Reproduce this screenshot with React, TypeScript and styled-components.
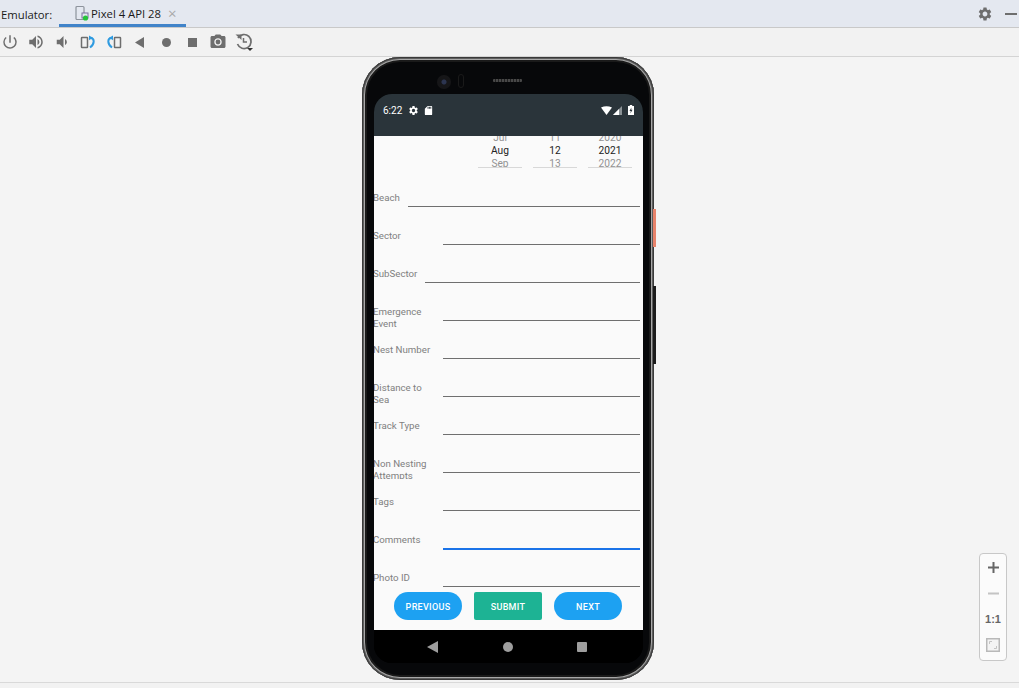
import React from 'react'
import styled, { createGlobalStyle } from 'styled-components'
import { MdPhotoCamera, MdPowerSettingsNew, MdSdCard, MdSettings, MdVolumeDown, MdVolumeUp } from 'react-icons/md'

const GlobalStyle = createGlobalStyle`
    html, body {
        margin: 0;
        height: 100%;
        background: #f4f4f4;
    }
    #root {
        height: 100%;
    }
`

const Page = styled.div`
    display: flex;
    flex-direction: column;
    position: relative;
    height: 688px;
    overflow: hidden;
    background: #f4f4f4;
    font-family: 'Open Sans', 'Liberation Sans', sans-serif;
`

const TabBar = styled.div`
    display: flex;
    align-items: stretch;
    height: 27px;
    background: #e4e8f0;
    border-bottom: 1px solid #c9c9c9;
    padding: 0 2px 0 1px;
    color: #1a1a1a;
    font-size: 11.3px;
`

const TabTitle = styled.div`
    width: 58px;
    line-height: 29px;
`

const Tab = styled.div`
    display: flex;
    align-items: center;
    gap: 1px;
    width: 127px;
    height: 27px;
    padding: 2px 0 0 16px;
    box-sizing: border-box;
    border-bottom: 3px solid #4083c9;
`

const TabClose = styled.span`
    margin-left: 6px;
    color: #a9a9a9;
    font-size: 15px;
    line-height: 1;
`

const TabBarEnd = styled.div`
    display: flex;
    align-items: center;
    gap: 12px;
    margin-left: auto;
    color: #6e6e6e;
`

const Minimize = styled.span`
    display: block;
    width: 12px;
    height: 2px;
    background: #6e6e6e;
`

const Toolbar = styled.div`
    display: flex;
    align-items: center;
    gap: 6px;
    height: 28px;
    background: #f2f2f2;
    border-bottom: 1px solid #d4d4d4;
    color: #6e6e6e;
`

const ToolIcon = styled.span`
    display: flex;
    align-items: center;
    justify-content: center;
    width: 20px;
    height: 20px;
    font-size: 18px;
`

const Main = styled.div`
    flex: 1;
    display: flex;
    justify-content: center;
    padding-right: 3px;
    min-height: 0;
`

const Phone = styled.div`
    position: relative;
    width: 292px;
    height: 623px;
    box-sizing: border-box;
    padding: 37px 11px 17px 12px;
    background: #07080a;
    border-radius: 38px;
    box-shadow: inset 0 0 0 1px #3a3a3a, inset 0 0 0 2px #5e5e5e, inset 0 0 0 3px #a8a8a8, inset 0 0 0 5px #1a1a1a;
`

const SideButton = styled.span<{ $top: number; $height: number; $color: string }>`
    position: absolute;
    right: -2px;
    top: ${p => p.$top}px;
    width: 3px;
    height: ${p => p.$height}px;
    background: ${p => p.$color};
`

const Camera = styled.span`
    position: absolute;
    left: 75px;
    top: 18px;
    width: 14px;
    height: 14px;
    border-radius: 50%;
    background: radial-gradient(circle, #2c3550 0 2px, #161618 3px 7px);
`

const Sensor = styled.span`
    position: absolute;
    left: 96px;
    top: 17px;
    width: 6px;
    height: 14px;
    border-radius: 3px;
    border: 1px solid #1a1a1a;
    box-sizing: border-box;
`

const Speaker = styled.span`
    position: absolute;
    left: 131px;
    top: 22px;
    width: 29px;
    height: 3px;
    border-radius: 1px;
    background: repeating-linear-gradient(90deg, #484848 0 2px, #222 2px 3px);
`

const Screen = styled.div`
    display: flex;
    flex-direction: column;
    height: 100%;
    border-radius: 18px;
    overflow: hidden;
    background: #000;
    font-family: Roboto, 'Liberation Sans', sans-serif;
`

const StatusBar = styled.div`
    display: flex;
    align-items: center;
    height: 42px;
    padding: 0 9px 10px;
    box-sizing: border-box;
    background: #2a343a;
    color: #fff;
    font-size: 10px;
`

const StatusTime = styled.span`
    margin-right: 6px;
`

const StatusIcon = styled.span`
    display: flex;
    margin-right: 4px;
    font-size: 11px;
`

const StatusRight = styled.div`
    display: flex;
    align-items: center;
    gap: 1px;
    margin-left: auto;
`

const Content = styled.div`
    flex: 1;
    display: flex;
    flex-direction: column;
    min-height: 0;
    overflow: hidden;
    background: #fafafa;
`

const Picker = styled.div`
    display: flex;
    gap: 11px;
    height: 32px;
    margin: 0 0 22px 104px;
    overflow: hidden;
`

const Wheel = styled.div`
    width: 44px;
    height: 31px;
    border-bottom: 1px solid #d8d8d8;
    overflow: hidden;
    text-align: center;
    font-size: 10.2px;
    line-height: 13px;
`

const WheelInner = styled.div`
    margin-top: -5px;
`

const WheelItem = styled.div<{ $selected?: boolean }>`
    color: ${p => (p.$selected ? '#222' : '#929292')};
`

const Form = styled.div`
    flex: 1;
    min-height: 0;
    overflow: hidden;
    padding-right: 3px;
`

const Row = styled.div<{ $labelWidth: number }>`
    display: grid;
    grid-template-columns: ${p => p.$labelWidth}px 1fr;
    height: 38px;
`

const Label = styled.div`
    height: 23px;
    padding: 2px 6px 0 0;
    margin-left: -1px;
    box-sizing: border-box;
    overflow: hidden;
    font-size: 9.7px;
    line-height: 11.5px;
    color: #808080;
`

const Line = styled.div<{ $focused?: boolean }>`
    height: ${p => (p.$focused ? 18 : 17)}px;
    box-sizing: border-box;
    border-bottom: ${p => (p.$focused ? '2px solid #1a73e8' : '1px solid #6f6f6f')};
`

const ButtonBar = styled.div`
    display: flex;
    gap: 12px;
    padding: 0 0 10px 20px;
`

const ActionButton = styled.button<{ $square?: boolean }>`
    width: 68px;
    height: 28px;
    padding: 1px 0 0;
    border: 0;
    border-radius: ${p => (p.$square ? '2px' : '14px')};
    background: ${p => (p.$square ? '#1db394' : '#1da1f2')};
    color: #fff;
    font-family: Roboto, 'Liberation Sans', sans-serif;
    font-size: 9px;
    font-weight: 500;
    letter-spacing: 0.3px;
`

const NavBar = styled.div`
    display: flex;
    align-items: center;
    height: 33px;
    background: #000;
`

const NavSlot = styled.span<{ $left: number }>`
    display: flex;
    margin-left: ${p => p.$left}px;
`

const NavCircle = styled.span`
    display: block;
    width: 10px;
    height: 10px;
    border-radius: 50%;
    background: #9e9e9e;
`

const NavSquare = styled.span`
    display: block;
    width: 10px;
    height: 10px;
    border-radius: 1px;
    background: #9e9e9e;
`

const Footer = styled.div`
    height: 5px;
    background: #f2f2f2;
    border-top: 1px solid #d9d9d9;
`

const ZoomPanel = styled.div`
    position: absolute;
    left: 979px;
    top: 553px;
    display: flex;
    flex-direction: column;
    align-items: center;
    width: 28px;
    height: 108px;
    box-sizing: border-box;
    background: #fbfbfb;
    border: 1px solid #c8c8c8;
    border-radius: 4px;
`

const ZoomItem = styled.div`
    display: flex;
    align-items: center;
    justify-content: center;
    width: 100%;
    height: 26px;
    color: #666;
    font-family: 'Liberation Sans', sans-serif;
    font-size: 11px;
    font-weight: 700;
`

const fields = [
    { label: 'Beach', width: 34 },
    { label: 'Sector', width: 69 },
    { label: 'SubSector', width: 51 },
    { label: 'Emergence Event', width: 69 },
    { label: 'Nest Number', width: 69 },
    { label: 'Distance to Sea', width: 69 },
    { label: 'Track Type', width: 69 },
    { label: 'Non Nesting Attempts', width: 69 },
    { label: 'Tags', width: 69 },
    { label: 'Comments', width: 69, focused: true },
    { label: 'Photo ID', width: 69 }
]

const wheels = [
    ['Jul', 'Aug', 'Sep'],
    ['11', '12', '13'],
    ['2020', '2021', '2022']
]

const DeviceIcon = () => (
    <svg width="15" height="17" viewBox="0 0 15 17">
        <rect x="1" y="1.5" width="8" height="13" rx="1" fill="none" stroke="#8d939c" strokeWidth="1.2" />
        <rect x="7" y="8" width="6" height="5" fill="#e4e8f0" stroke="#7b6f9c" />
        <circle cx="10.5" cy="13" r="2.6" fill="#27c33b" />
    </svg>
)

const RotateIcon = ({ flip }: { flip?: boolean }) => (
    <svg width="20" height="20" viewBox="0 0 20 20" style={flip ? { transform: 'scaleX(-1)' } : undefined}>
        <rect x="3.5" y="5.5" width="6" height="10" rx="0.5" fill="none" stroke="#6e6e6e" strokeWidth="1.5" />
        <path d="M13 6 C16.5 6.5 17 12 12 15.5" fill="none" stroke="#2f9be0" strokeWidth="2" />
        <path d="M11 3.5 L15 5.8 L11 8.2 Z" fill="#2f9be0" />
    </svg>
)

const HistoryIcon = () => (
    <svg width="20" height="20" viewBox="0 0 20 20">
        <path d="M4 6 A7 7 0 1 1 3.5 12" fill="none" stroke="#6e6e6e" strokeWidth="1.7" />
        <path d="M1.5 2.5 L7.5 2.5 L7.5 8 Z" fill="#6e6e6e" />
        <path d="M9.5 6 V10 H13" fill="none" stroke="#6e6e6e" strokeWidth="1.5" />
        <path d="M13 16 H19 L16 19 Z" fill="#333" />
    </svg>
)

const Wifi = () => (
    <svg width="11" height="9" viewBox="0 0 11 9">
        <path d="M0 1.5 Q5.5 -1 11 1.5 L5.5 9 Z" fill="#fff" />
    </svg>
)

const Signal = () => (
    <svg width="9" height="9" viewBox="0 0 9 9">
        <path d="M9 0 V9 H0 Z" fill="#8b9296" />
        <path d="M6 3 V9 H0 Z" fill="#fff" />
    </svg>
)

const Battery = () => (
    <svg width="6" height="10" viewBox="0 0 6 10" style={{ marginLeft: 5 }}>
        <path d="M1.8 0 H4.2 V1 H6 V10 H0 V1 H1.8 Z" fill="#fff" />
        <path d="M3.4 2.5 L1.5 6 H2.8 L2.4 8.5 L4.5 4.8 H3.2 Z" fill="#2a343a" />
    </svg>
)

const NavBack = () => (
    <svg width="11" height="12" viewBox="0 0 11 12">
        <path d="M11 0 V12 L0 6 Z" fill="#9e9e9e" />
    </svg>
)

const FitIcon = () => (
    <svg width="14" height="14" viewBox="0 0 14 14">
        <rect x="0.75" y="0.75" width="12.5" height="12.5" fill="#f4f4f4" stroke="#b9b9b9" strokeWidth="1.5" />
        <path d="M3.5 6 V3.5 H6 M10.5 8 V10.5 H8" fill="none" stroke="#c4c4c4" />
    </svg>
)

const ZoomBar = ({ vertical, color }: { vertical?: boolean; color: string }) => (
    <svg width="11" height="11" viewBox="0 0 11 11">
        <rect x="0" y="4.5" width="11" height="2" fill={color} />
        {vertical && <rect x="4.5" y="0" width="2" height="11" fill={color} />}
    </svg>
)

function App(): JSX.Element {
    return (
        <Page>
            <GlobalStyle />
            <TabBar>
                <TabTitle>Emulator:</TabTitle>
                <Tab>
                    <DeviceIcon />
                    <span>Pixel 4 API 28</span>
                    <TabClose>×</TabClose>
                </Tab>
                <TabBarEnd>
                    <MdSettings size={16} />
                    <Minimize />
                </TabBarEnd>
            </TabBar>
            <Toolbar>
                <ToolIcon><MdPowerSettingsNew /></ToolIcon>
                <ToolIcon><MdVolumeUp /></ToolIcon>
                <ToolIcon><MdVolumeDown /></ToolIcon>
                <ToolIcon><RotateIcon /></ToolIcon>
                <ToolIcon><RotateIcon flip /></ToolIcon>
                <ToolIcon>
                    <svg width="10" height="11" viewBox="0 0 10 11"><path d="M9 0 V11 L0 5.5 Z" fill="#6e6e6e" /></svg>
                </ToolIcon>
                <ToolIcon>
                    <svg width="9" height="9" viewBox="0 0 9 9"><circle cx="4.5" cy="4.5" r="4.5" fill="#6e6e6e" /></svg>
                </ToolIcon>
                <ToolIcon>
                    <svg width="9" height="9" viewBox="0 0 9 9"><rect width="9" height="9" fill="#6e6e6e" /></svg>
                </ToolIcon>
                <ToolIcon><MdPhotoCamera /></ToolIcon>
                <ToolIcon><HistoryIcon /></ToolIcon>
            </Toolbar>
            <Main>
                <Phone>
                    <Camera />
                    <Sensor />
                    <Speaker />
                    <SideButton $top={152} $height={38} $color="#e8836b" />
                    <SideButton $top={229} $height={78} $color="#1c1c1c" />
                    <Screen>
                        <StatusBar>
                            <StatusTime>6:22</StatusTime>
                            <StatusIcon><MdSettings /></StatusIcon>
                            <StatusIcon><MdSdCard /></StatusIcon>
                            <StatusRight>
                                <Wifi />
                                <Signal />
                                <Battery />
                            </StatusRight>
                        </StatusBar>
                        <Content>
                            <Picker>
                                {wheels.map(items => (
                                    <Wheel key={items[0]}>
                                        <WheelInner>
                                            {items.map((item, i) => (
                                                <WheelItem key={item} $selected={i === 1}>
                                                    {item}
                                                </WheelItem>
                                            ))}
                                        </WheelInner>
                                    </Wheel>
                                ))}
                            </Picker>
                            <Form>
                                {fields.map(field => (
                                    <Row key={field.label} $labelWidth={field.width}>
                                        <Label>{field.label}</Label>
                                        <Line $focused={field.focused} />
                                    </Row>
                                ))}
                            </Form>
                            <ButtonBar>
                                <ActionButton>PREVIOUS</ActionButton>
                                <ActionButton $square>SUBMIT</ActionButton>
                                <ActionButton>NEXT</ActionButton>
                            </ButtonBar>
                        </Content>
                        <NavBar>
                            <NavSlot $left={53}><NavBack /></NavSlot>
                            <NavSlot $left={65}><NavCircle /></NavSlot>
                            <NavSlot $left={64}><NavSquare /></NavSlot>
                        </NavBar>
                    </Screen>
                </Phone>
            </Main>
            <Footer />
            <ZoomPanel>
                <ZoomItem><ZoomBar vertical color="#666" /></ZoomItem>
                <ZoomItem><ZoomBar color="#c4c4c4" /></ZoomItem>
                <ZoomItem>1:1</ZoomItem>
                <ZoomItem><FitIcon /></ZoomItem>
            </ZoomPanel>
        </Page>
    )
}

export default App
